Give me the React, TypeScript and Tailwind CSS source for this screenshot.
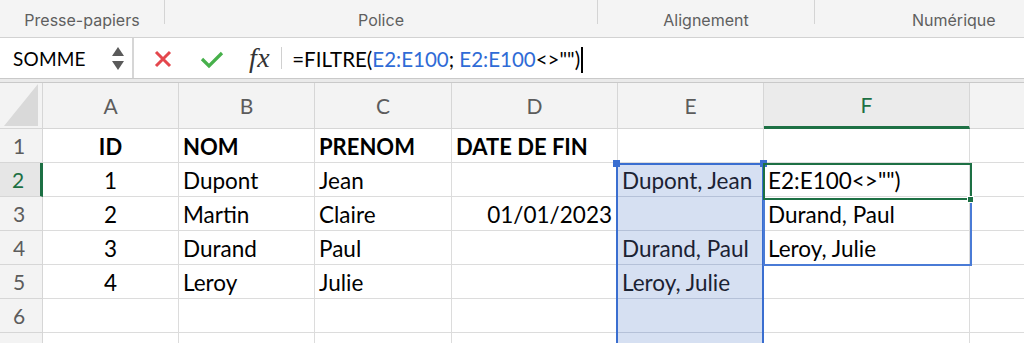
import React from "react";

const LETTERS = ["A", "B", "C", "D", "E", "F", "G"];

type Cell = { t?: string; align?: "l" | "c" | "r"; bold?: boolean };

const ROWS: Cell[][] = [
  [{ t: "ID", align: "c", bold: true }, { t: "NOM", bold: true }, { t: "PRENOM", bold: true }, { t: "DATE DE FIN", bold: true }, {}, {}, {}],
  [{ t: "1", align: "c" }, { t: "Dupont" }, { t: "Jean" }, {}, { t: "Dupont, Jean" }, { t: 'E2:E100<>"")' }, {}],
  [{ t: "2", align: "c" }, { t: "Martin" }, { t: "Claire" }, { t: "01/01/2023", align: "r" }, {}, { t: "Durand, Paul" }, {}],
  [{ t: "3", align: "c" }, { t: "Durand" }, { t: "Paul" }, {}, { t: "Durand, Paul" }, { t: "Leroy, Julie" }, {}],
  [{ t: "4", align: "c" }, { t: "Leroy" }, { t: "Julie" }, {}, { t: "Leroy, Julie" }, {}, {}],
  [{}, {}, {}, {}, {}, {}, {}],
  [{}, {}, {}, {}, {}, {}, {}],
];

export default function App() {
  return (
    <div className="w-[1024px] h-[343px] overflow-hidden bg-white font-['Lato',sans-serif] text-black">
      {/* Ribbon group labels */}
      <div className="flex h-[38px] bg-[#f4f4f4] border-b border-[#d2d2d2] font-['Inter',sans-serif] text-[16px] text-[#5f5f5f]">
        <div className="w-[164px] flex items-end justify-center pb-[5px]">Presse-papiers</div>
        <div className="w-px h-[24px] bg-[#d4d4d4]" />
        <div className="w-[432px] flex items-end justify-center pb-[5px]">Police</div>
        <div className="w-px h-[24px] bg-[#d4d4d4]" />
        <div className="w-[216px] flex items-end justify-center pb-[5px]">Alignement</div>
        <div className="w-px h-[24px] bg-[#d4d4d4]" />
        <div className="flex-1 flex items-end pl-[97px] pb-[5px]">Numérique</div>
      </div>

      {/* Formula bar */}
      <div className="flex h-[40px] items-center bg-white">
        <div className="w-[134px] h-full flex items-center pl-[13px] border-r-2 border-[#d6d6d6]">
          <span className="text-[19px] tracking-[0.2px] pt-[2px]">SOMME</span>
          <div className="ml-auto mr-[8px] flex flex-col items-center gap-[5px]">
            <svg width="12" height="9" viewBox="0 0 12 9"><path d="M6 0 L12 9 L0 9 Z" fill="#5a5a5a" /></svg>
            <svg width="12" height="9" viewBox="0 0 12 9"><path d="M0 0 L12 0 L6 9 Z" fill="#5a5a5a" /></svg>
          </div>
        </div>
        <div className="w-[19px]" />
        <svg width="20" height="20" viewBox="0 0 20 20" className="mt-[2px]">
          <path d="M3 3 L17 17 M17 3 L3 17" stroke="#e4474d" strokeWidth="3" strokeLinecap="butt" />
        </svg>
        <div className="w-[27px]" />
        <svg width="24" height="20" viewBox="0 0 24 20" className="mt-[2px]">
          <path d="M2 10 L9 17 L22 4" stroke="#47b04b" strokeWidth="3.2" fill="none" strokeLinejoin="miter" />
        </svg>
        <div className="w-[25px]" />
        <span className="font-['Liberation_Serif',serif] italic text-[28px] leading-none text-[#333] tracking-[0.5px]">fx</span>
        <div className="w-[11px]" />
        <div className="w-px h-[22px] bg-[#d0d0d0]" />
        <div className="w-[10px]" />
        <div className="flex items-center text-[20.5px] pt-[3px]">
          <span>=FILTRE(</span>
          <span className="text-[#2f6bd6]">E2:E100</span>
          <span className="whitespace-pre">; </span>
          <span className="text-[#2f6bd6]">E2:E100</span>
          <span>&lt;&gt;"")</span>
          <span className="ml-[1px] w-[2px] h-[26px] bg-black" />
        </div>
      </div>

      {/* separator band */}
      <div className="h-[5px] bg-[#eaeaea] border-t border-b border-[#c9c9c9]" />

      {/* Grid */}
      <div className="relative">
        <div className="grid grid-cols-[43px_136px_136px_137px_166px_146px_206px_54px]">
          {/* header row */}
          <div className="h-[46px] bg-[#f3f3f3] border-r border-b border-[#d6d6d6] flex items-end justify-start pl-[4px] pb-[2px]">
            <svg width="34" height="42" viewBox="0 0 34 42"><path d="M34 0 L34 42 L0 42 Z" fill="#d9d9d9" /></svg>
          </div>
          {LETTERS.map((l, i) => (
            <div
              key={l}
              className={
                "h-[46px] flex items-center justify-center text-[21px] border-b border-[#d6d6d6] " +
                (i < 6 ? "border-r " : "") +
                (l === "F"
                  ? "bg-[#ebebeb] text-[#1d7044] border-b-[3px] border-b-[#1d7044]"
                  : "bg-[#f3f3f3] text-[#5c5c5c]")
              }
            >
              {l === "G" ? "" : l}
            </div>
          ))}

          {ROWS.map((row, r) => (
            <React.Fragment key={r}>
              <div
                className={
                  "h-[34px] border-r border-b border-[#d6d6d6] flex items-center justify-center pr-[4px] text-[21px] " +
                  (r === 1
                    ? "bg-[#e6e6e6] text-[#1d7044] border-r-[3px] border-r-[#1d7044]"
                    : "bg-[#f3f3f3] text-[#5c5c5c]")
                }
              >
                {r + 1}
              </div>
              {row.map((c, ci) => {
                const inE = ci === 4 && r >= 1;
                const align =
                  c.align === "c" ? "justify-center" : c.align === "r" ? "justify-end pr-[5px]" : "justify-start pl-[4px]";
                return (
                  <div
                    key={ci}
                    className={
                      "h-[34px] flex items-center whitespace-nowrap overflow-visible border-b pt-[2px] " +
                      (c.bold ? "text-[22px] font-bold " : "text-[22.5px] ") +
                      (ci < 6 ? "border-r " : "") +
                      (inE ? "bg-[#d6e0f2] border-[#b5c1d8] text-[#1b2233] " : "border-[#dcdcdc] ") +
                      align
                    }
                  >
                    {c.t}
                  </div>
                );
              })}
            </React.Fragment>
          ))}
        </div>

        {/* E selection outline */}
        <div className="absolute left-[616px] top-[80px] w-[148px] h-[200px] border-2 border-[#3a6ed0] pointer-events-none" />
        <div className="absolute left-[613px] top-[77px] w-[7px] h-[7px] bg-[#3a6ed0]" />
        <div className="absolute left-[760px] top-[77px] w-[7px] h-[7px] bg-[#3a6ed0]" />

        {/* F spill range outline */}
        <div className="absolute left-[763px] top-[80px] w-[209px] h-[103px] border-2 border-[#4a7bd6] pointer-events-none" />
        {/* F2 active cell */}
        <div className="absolute left-[763px] top-[80px] w-[209px] h-[37px] border-2 border-[#1d7044] pointer-events-none" />
        <div className="absolute left-[967px] top-[113px] w-[7px] h-[7px] bg-[#1d7044] border border-white" />
      </div>
    </div>
  );
}
